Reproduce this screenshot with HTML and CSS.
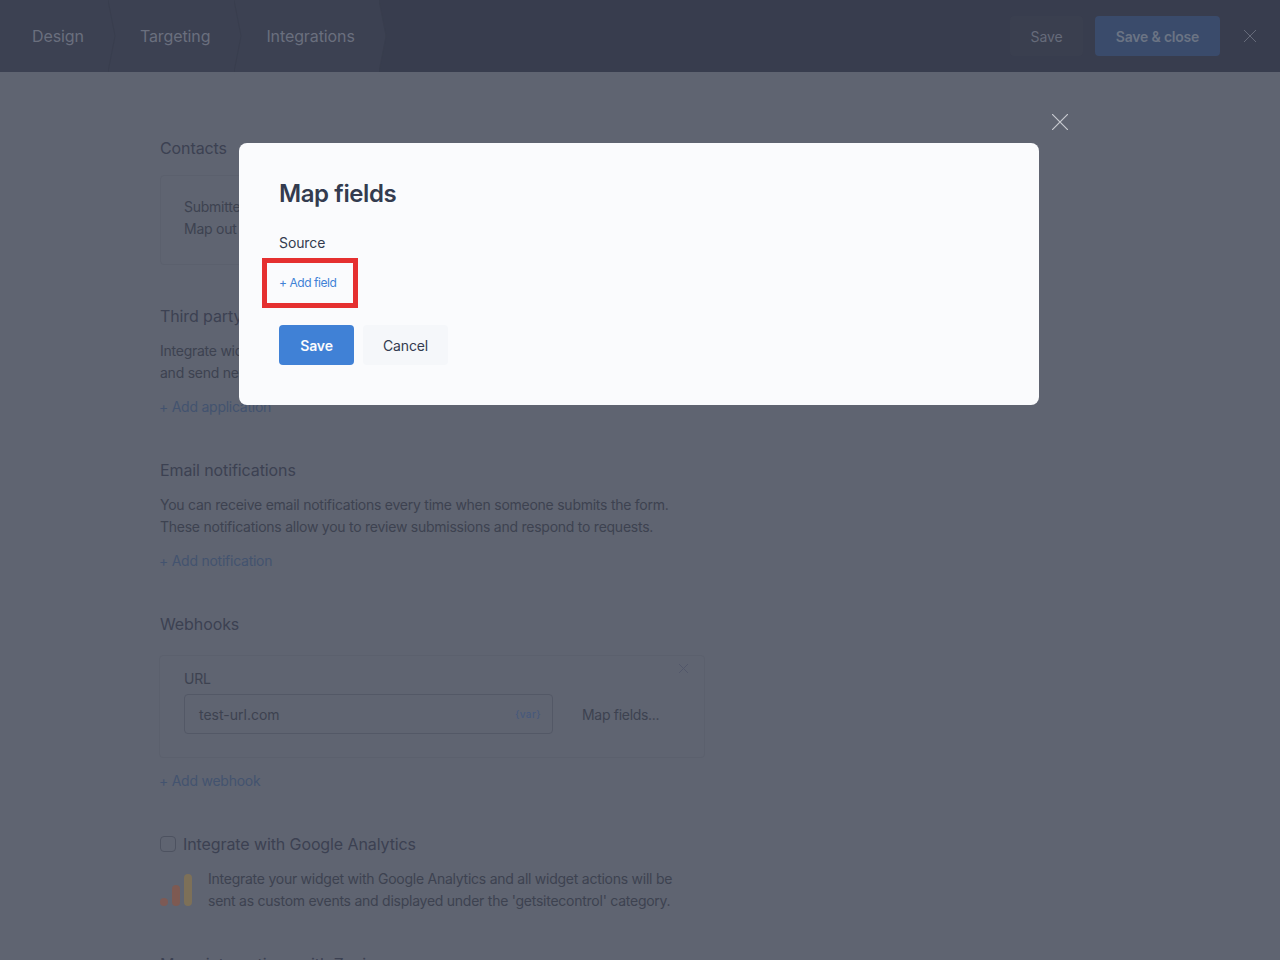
FILE: index.html
```html
<!DOCTYPE html>
<html lang="en">
<head>
<meta charset="utf-8">
<title>Map fields</title>
<link rel="stylesheet" href="styles.css">
</head>
<body>
<div class="page">
  <header class="topbar">
    <nav class="tabs">
      <a class="tab tab-first">Design<svg class="chev" width="8" height="72" viewBox="0 0 8 72"><path d="M0 0L7 36L0 72" /></svg></a>
      <a class="tab">Targeting<svg class="chev" width="8" height="72" viewBox="0 0 8 72"><path d="M0 0L7 36L0 72" /></svg></a>
      <a class="tab">Integrations<svg class="chev" width="8" height="72" viewBox="0 0 8 72"><path class="chev-end" d="M0 0L7 36L0 72L8 72L8 0Z" /><path d="M0 0L7 36L0 72" /></svg></a>
    </nav>
    <div class="actions">
      <button class="btn btn-dark">Save</button>
      <button class="btn btn-blue">Save &amp; close</button>
      <svg class="top-x" width="12" height="12" viewBox="0 0 12 12"><path d="M0 0L12 12M12 0L0 12"/></svg>
    </div>
  </header>
  <main class="content">
    <section class="sec sec-contacts">
      <h2 class="h">Contacts</h2>
      <div class="card card-contacts">
        <p class="txt">Submitted contacts can be sent to your list.</p>
        <p class="txt">Map out the form fields to your list.</p>
      </div>
    </section>
    <section class="sec sec-third">
      <h2 class="h">Third party applications</h2>
      <p class="txt lead">Integrate widget with your favorite applications</p>
      <p class="txt">and send new contacts to your list automatically.</p>
      <a class="add">+ Add application</a>
    </section>
    <section class="sec sec-email">
      <h2 class="h">Email notifications</h2>
      <p class="txt lead">You can receive email notifications every time when someone submits the form.</p>
      <p class="txt">These notifications allow you to review submissions and respond to requests.</p>
      <a class="add">+ Add notification</a>
    </section>
    <section class="sec sec-hooks">
      <h2 class="h">Webhooks</h2>
      <div class="card card-hook">
        <svg class="hook-x" width="9" height="9" viewBox="0 0 9 9"><path d="M0 0L9 9M9 0L0 9"/></svg>
        <label class="url-label">URL</label>
        <div class="url-row">
          <div class="input"><span>test-url.com</span><span class="var">{var}</span></div>
          <a class="map">Map fields...</a>
        </div>
      </div>
      <a class="add">+ Add webhook</a>
    </section>
    <section class="sec sec-ga">
      <div class="check-row"><span class="check"></span><h2 class="h">Integrate with Google Analytics</h2></div>
      <div class="ga-row">
        <svg class="ga" width="32" height="32" viewBox="0 0 32 32">
          <circle cx="4" cy="28" r="4" fill="#7d5a55"/>
          <rect x="12" y="11" width="8" height="21" rx="4" fill="#7e5a52"/>
          <rect x="24" y="0" width="8" height="32" rx="4" fill="#7d7058"/>
        </svg>
        <div>
          <p class="txt">Integrate your widget with Google Analytics and all widget actions will be</p>
          <p class="txt">sent as custom events and displayed under the 'getsitecontrol' category.</p>
        </div>
      </div>
    </section>
    <section class="sec sec-zapier">
      <h2 class="h">Many integrations with Zapier</h2>
    </section>
  </main>
</div>
<div class="overlay">
  <div class="dialog">
    <svg class="dialog-x" width="16" height="16" viewBox="0 0 16 16"><path d="M0 0L16 16M16 0L0 16"/></svg>
    <h1 class="title">Map fields</h1>
    <div class="source">Source</div>
    <a class="add-field">+ Add field<span class="mark"></span></a>
    <div class="dialog-actions">
      <button class="btn btn-save">Save</button>
      <button class="btn btn-cancel">Cancel</button>
    </div>
  </div>
</div>
</body>
</html>
```
FILE: styles.css
```css
* { box-sizing: border-box; }
html, body { margin: 0; height: 100%; overflow: hidden; }
body { font-family: Inter, "Noto Sans", sans-serif; background: #5f6471; color: #2f3850; }
h1, h2, p { margin: 0; font-weight: 400; }
.page { height: 960px; overflow: hidden; background: #5f6471; }

.topbar { height: 72px; display: flex; justify-content: space-between; background: #383d4e; }
.tabs { display: flex; background: #3c4152; }
.tab { position: relative; display: flex; align-items: center; height: 72px; padding: 0 32px 0 24px; font-size: 16px; letter-spacing: -0.1px; color: #6a6f7e; }
.tab-first { padding-left: 32px; }
.chev { position: absolute; right: 0; top: 0; fill: none; stroke: #393e4e; stroke-width: 1; }
.chev .chev-end { fill: #383d4e; stroke: none; }
.actions { display: flex; align-items: center; padding: 0 24px 0 0; }
.btn { font-family: inherit; font-size: 14px; height: 40px; border: 0; border-radius: 4px; padding: 0; letter-spacing: -0.1px; }
.btn-dark { width: 73px; background: #3a3f4f; color: #666b7a; }
.btn-blue { width: 125px; margin-left: 12px; background: #3a4b6b; color: #6b7484; font-weight: 600; letter-spacing: -0.2px; }
.top-x { margin-left: 24px; fill: none; stroke: #666b7a; stroke-width: 1; }

.content { padding-left: 160px; width: 705px; color: #3c4152; font-size: 14px; }
.h { font-size: 16px; line-height: 24px; color: #3c4152; letter-spacing: -0.1px; white-space: nowrap; }
.txt { font-size: 14px; line-height: 22px; color: #3d4250; letter-spacing: -0.25px; white-space: nowrap; }
.lead { margin-top: 12px; }
.add { display: block; margin: 12px 0 0 -1px; font-size: 14px; line-height: 22px; color: #43536f; letter-spacing: -0.25px; }
.card { position: relative; border: 1px solid #5b606d; border-radius: 4px; }

.sec-contacts { padding-top: 64px; }
.card-contacts { margin-top: 15px; height: 90px; padding: 20px 23px; }
.sec-third { margin-top: 39px; }
.sec-email { margin-top: 40px; }
.sec-hooks { margin-top: 40px; }
.card-hook { margin-top: 19px; height: 103px; padding: 12px 24px; margin-left: -1px; }
.hook-x { position: absolute; top: 8px; right: 16px; fill: none; stroke: #52576a; stroke-width: 1; }
.url-label { display: block; font-size: 14px; line-height: 22px; color: #3d4250; letter-spacing: -0.25px; }
.url-row { display: flex; align-items: center; margin-top: 4px; }
.input { display: flex; align-items: center; justify-content: space-between; width: 369px; height: 40px; padding: 0 11px 0 14px; border: 1px solid #535866; border-radius: 4px; color: #3d4250; }
.var { font-size: 10px; font-weight: 500; letter-spacing: 0.4px; color: #47597c; }
.map { margin-left: 29px; color: #3d4250; letter-spacing: -0.3px; }
.sec-ga { margin-top: 40px; }
.check-row { display: flex; align-items: center; gap: 7px; }
.check { width: 16px; height: 16px; border: 1px solid #4d5260; border-radius: 4px; }
.ga-row { display: flex; margin-top: 12px; gap: 16px; align-items: center; }
.ga { flex: none; }
.sec-zapier { margin-top: 40px; }

.overlay { position: fixed; inset: 0; display: flex; justify-content: center; align-items: flex-start; padding: 143px 2px 0 0; }
.dialog { position: relative; width: 800px; height: 262px; padding: 36px 40px 40px; background: #fafbfd; border-radius: 8px; color: #2f3850; }
.dialog-x { position: absolute; left: 813px; top: -29px; fill: none; stroke: #c8cad0; stroke-width: 1.2; }
.title { font-size: 24px; line-height: 30px; font-weight: 600; letter-spacing: -0.4px; color: #333b4f; }
.source { margin-top: 23px; font-size: 14px; line-height: 22px; color: #333b4f; letter-spacing: -0.1px; }
.add-field { position: relative; display: block; width: max-content; margin-top: 18px; font-size: 12px; line-height: 22px; color: #3f82d6; letter-spacing: -0.45px; }
.mark { position: absolute; left: -17px; top: -14px; width: 96px; height: 50px; border: 5px solid #e53030; }
.dialog-actions { display: flex; gap: 9px; margin-top: 31px; }
.btn-save { width: 75px; background: #4081d6; color: #fafbfd; font-weight: 600; }
.btn-cancel { width: 85px; background: #f5f7fa; color: #333b4f; letter-spacing: -0.15px; }
```
